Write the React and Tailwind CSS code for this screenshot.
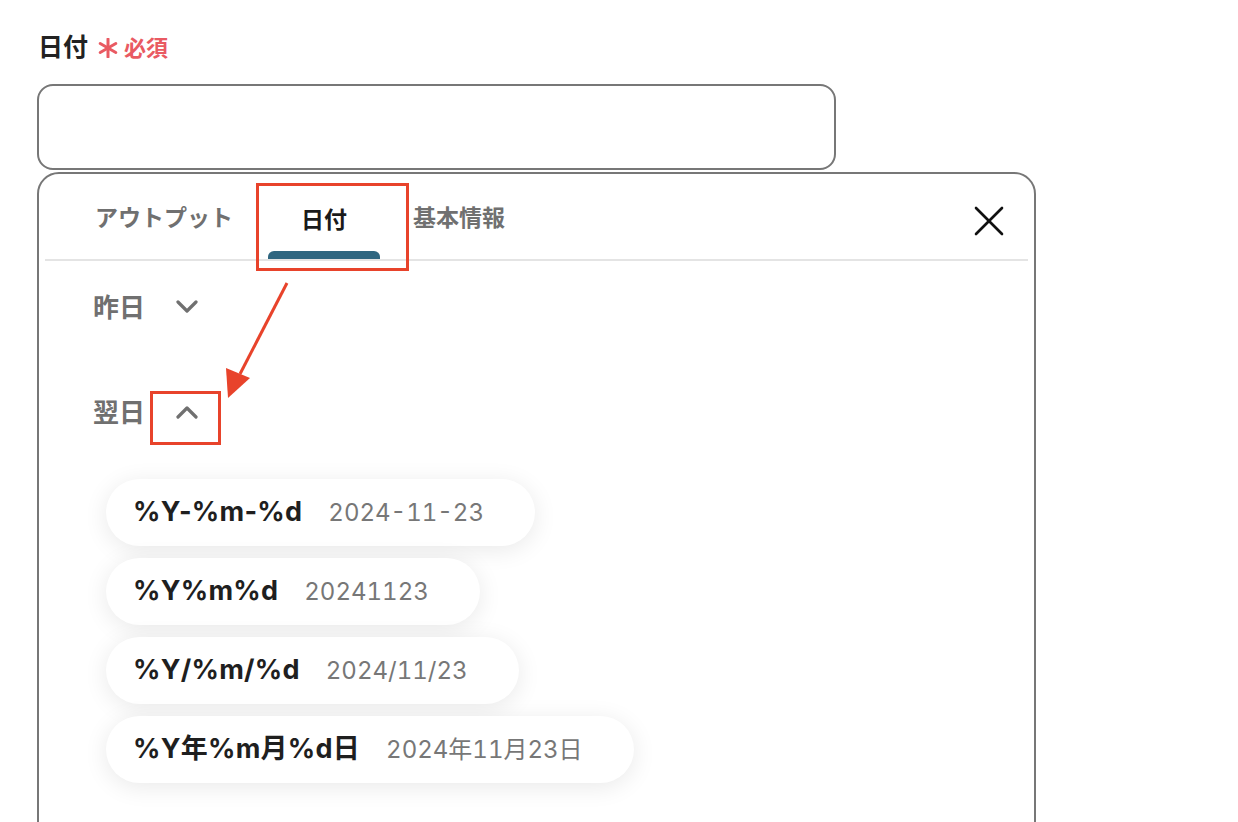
const formats = [
  { code: '%Y-%m-%d', sample: '2024-11-23' },
  { code: '%Y%m%d', sample: '20241123' },
  { code: '%Y/%m/%d', sample: '2024/11/23' },
  { code: '%Y年%m月%d日', sample: '2024年11月23日' },
];

function Chevron({ up }) {
  return (
    <svg width="22" height="14" viewBox="0 0 22 14" className="text-[#707070]">
      <polyline
        points={up ? '2,12 11,3 20,12' : '2,2 11,11 20,2'}
        fill="none"
        stroke="currentColor"
        strokeWidth="3.2"
        strokeLinecap="round"
        strokeLinejoin="round"
      />
    </svg>
  );
}

function Chip({ code, sample }) {
  return (
    <div className="flex items-center gap-[26px] h-[67px] pl-[27px] pr-[51px] bg-white rounded-full shadow-[0_4px_24px_rgba(0,0,0,0.09)] self-start">
      <span className="text-[27px] font-bold text-[#1f1f1f] tracking-[0.01em]">{code}</span>
      <span className="text-[24px] text-[#777] tabular-nums">{sample}</span>
    </div>
  );
}

export default function App() {
  return (
    <div
      className="w-[1238px] h-[822px] overflow-hidden bg-white pl-[37px] pt-[30px] relative"
      style={{ fontFamily: '"Inter", "Noto Sans CJK JP", "Noto Sans", sans-serif' }}
    >
      <div className="flex items-center h-[36px]">
        <span className="text-[25px] font-bold text-[#222] ml-[1px]">日付</span>
        <span className="ml-[10px] w-[20px] flex justify-center">
          <svg width="20" height="20" viewBox="0 0 20 20">
            <g stroke="#e95a62" strokeWidth="3" strokeLinecap="round">
              <line x1="10" y1="1" x2="10" y2="19" />
              <line x1="2.2" y1="5.5" x2="17.8" y2="14.5" />
              <line x1="2.2" y1="14.5" x2="17.8" y2="5.5" />
            </g>
          </svg>
        </span>
        <span className="ml-[6px] text-[22px] font-bold text-[#e95a62]">必須</span>
      </div>

      <div className="mt-[18px] w-[799px] h-[86px] border-2 border-[#777] rounded-[16px]" />

      <div className="mt-[2px] w-[999px] h-[700px] border-2 border-[#777] rounded-[22px] px-[6px]">
        <div className="flex items-end h-[87px] border-b-[2px] border-[#e4e4e4] relative">
          <div className="flex items-end pl-[50px]">
            <div className="w-[173px] h-[86px] flex items-center text-[23px] font-bold text-[#707070] pt-[4px]">
              アウトプット
            </div>
            <div className="w-[112px] h-[86px] flex flex-col items-center justify-end">
              <span className="text-[23px] font-bold text-[#1a1a1a] mb-[14px]">日付</span>
              <div className="w-[112px] h-[8px] bg-[#2f6680] rounded-t-[6px]" />
            </div>
            <div className="pl-[33px] h-[86px] flex items-center text-[23px] font-bold text-[#707070] pt-[4px]">
              基本情報
            </div>
          </div>
          <button className="absolute right-[24px] top-[32px]">
            <svg width="30" height="30" viewBox="0 0 30 30">
              <g stroke="#111" strokeWidth="2.6" strokeLinecap="round">
                <line x1="2" y1="2" x2="28" y2="28" />
                <line x1="28" y1="2" x2="2" y2="28" />
              </g>
            </svg>
          </button>
        </div>

        <div className="pl-[48px] pt-[26px] flex items-center gap-[31px] h-[66px]">
          <span className="text-[26px] font-bold text-[#707070]">昨日</span>
          <Chevron />
        </div>

        <div className="pl-[48px] mt-[52px] flex items-center gap-[31px] h-[66px]">
          <span className="text-[26px] font-bold text-[#707070]">翌日</span>
          <Chevron up />
        </div>

        <div className="mt-[34px] pl-[61px] flex flex-col gap-[12px]">
          {formats.map((f) => (
            <Chip key={f.code} {...f} />
          ))}
        </div>
      </div>

      {/* annotations */}
      <div className="absolute left-[256px] top-[183px] w-[153px] h-[88px] border-[3px] border-[#e8432b]" />
      <div className="absolute left-[150px] top-[391px] w-[71px] h-[54px] border-[3px] border-[#e8432b]" />
      <svg className="absolute left-0 top-0" width="1238" height="822" viewBox="0 0 1238 822">
        <line x1="287" y1="283" x2="240" y2="374" stroke="#e8432b" strokeWidth="3" />
        <polygon points="228,398 226,368 250,378" fill="#e8432b" />
      </svg>
    </div>
  );
}
